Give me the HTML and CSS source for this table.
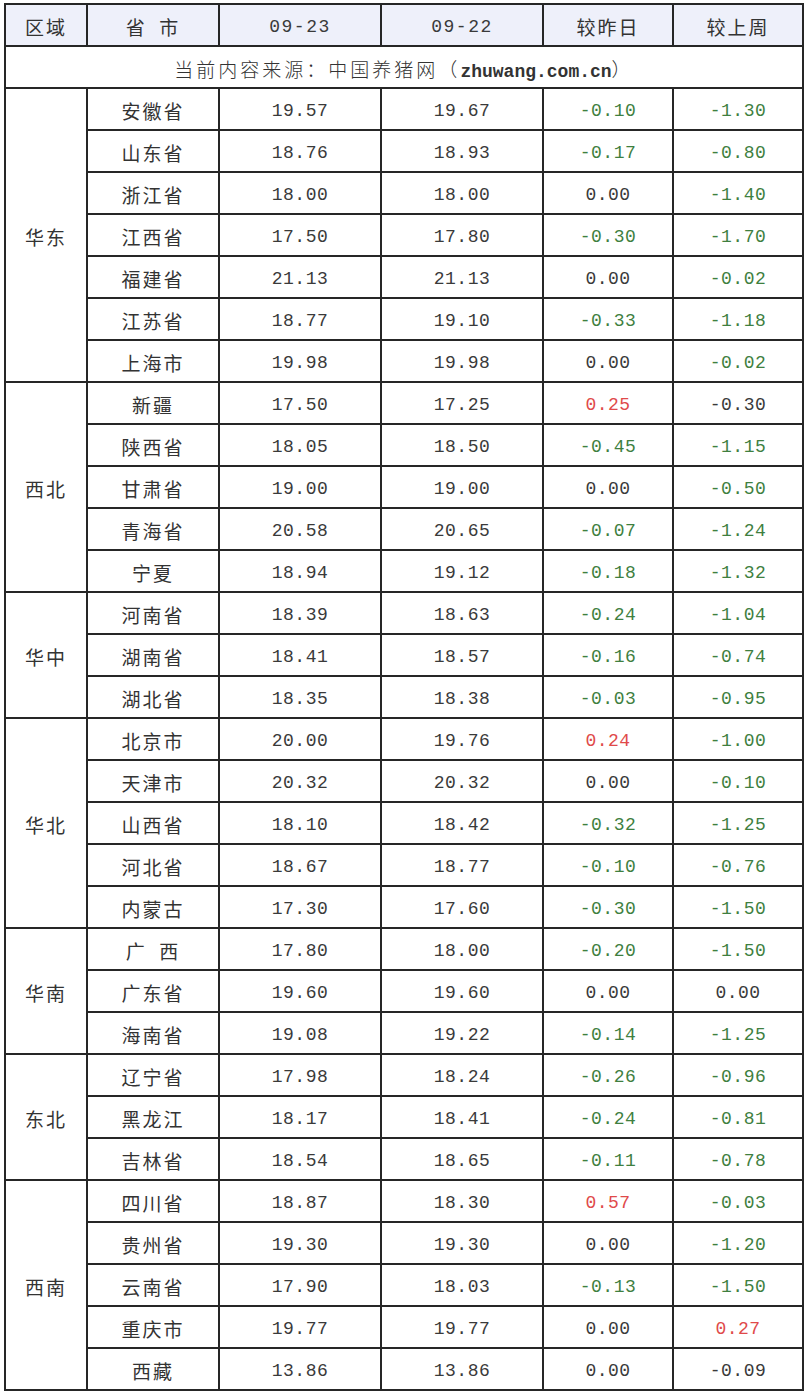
FILE: index.html
```html
<!DOCTYPE html>
<html lang="zh">
<head>
<meta charset="utf-8">
<link rel="stylesheet" href="styles.css">
</head>
<body>
<table class="price">
<colgroup>
<col class="c-region"><col class="c-prov"><col class="c-num"><col class="c-num"><col class="c-diff"><col class="c-diff">
</colgroup>
<thead>
<tr class="head"><th class="cn">区域</th><th class="cn">省&nbsp;&nbsp;市</th><th class="num">09-23</th><th class="num">09-22</th><th class="cn">较昨日</th><th class="cn">较上周</th></tr>
</thead>
<tbody>
<tr class="source"><td colspan="6"><span class="cn src">当前内容来源：中国养猪网（</span><span class="domain">zhuwang.com.cn</span><span class="cn src">）</span></td></tr>

<tr><td class="cn region" rowspan="7">华东</td><td class="cn">安徽省</td><td class="num">19.57</td><td class="num">19.67</td><td class="num dn">-0.10</td><td class="num dn">-1.30</td></tr>
<tr><td class="cn">山东省</td><td class="num">18.76</td><td class="num">18.93</td><td class="num dn">-0.17</td><td class="num dn">-0.80</td></tr>
<tr><td class="cn">浙江省</td><td class="num">18.00</td><td class="num">18.00</td><td class="num">0.00</td><td class="num dn">-1.40</td></tr>
<tr><td class="cn">江西省</td><td class="num">17.50</td><td class="num">17.80</td><td class="num dn">-0.30</td><td class="num dn">-1.70</td></tr>
<tr><td class="cn">福建省</td><td class="num">21.13</td><td class="num">21.13</td><td class="num">0.00</td><td class="num dn">-0.02</td></tr>
<tr><td class="cn">江苏省</td><td class="num">18.77</td><td class="num">19.10</td><td class="num dn">-0.33</td><td class="num dn">-1.18</td></tr>
<tr><td class="cn">上海市</td><td class="num">19.98</td><td class="num">19.98</td><td class="num">0.00</td><td class="num dn">-0.02</td></tr>

<tr><td class="cn region" rowspan="5">西北</td><td class="cn">新疆</td><td class="num">17.50</td><td class="num">17.25</td><td class="num up">0.25</td><td class="num">-0.30</td></tr>
<tr><td class="cn">陕西省</td><td class="num">18.05</td><td class="num">18.50</td><td class="num dn">-0.45</td><td class="num dn">-1.15</td></tr>
<tr><td class="cn">甘肃省</td><td class="num">19.00</td><td class="num">19.00</td><td class="num">0.00</td><td class="num dn">-0.50</td></tr>
<tr><td class="cn">青海省</td><td class="num">20.58</td><td class="num">20.65</td><td class="num dn">-0.07</td><td class="num dn">-1.24</td></tr>
<tr><td class="cn">宁夏</td><td class="num">18.94</td><td class="num">19.12</td><td class="num dn">-0.18</td><td class="num dn">-1.32</td></tr>

<tr><td class="cn region" rowspan="3">华中</td><td class="cn">河南省</td><td class="num">18.39</td><td class="num">18.63</td><td class="num dn">-0.24</td><td class="num dn">-1.04</td></tr>
<tr><td class="cn">湖南省</td><td class="num">18.41</td><td class="num">18.57</td><td class="num dn">-0.16</td><td class="num dn">-0.74</td></tr>
<tr><td class="cn">湖北省</td><td class="num">18.35</td><td class="num">18.38</td><td class="num dn">-0.03</td><td class="num dn">-0.95</td></tr>

<tr><td class="cn region" rowspan="5">华北</td><td class="cn">北京市</td><td class="num">20.00</td><td class="num">19.76</td><td class="num up">0.24</td><td class="num dn">-1.00</td></tr>
<tr><td class="cn">天津市</td><td class="num">20.32</td><td class="num">20.32</td><td class="num">0.00</td><td class="num dn">-0.10</td></tr>
<tr><td class="cn">山西省</td><td class="num">18.10</td><td class="num">18.42</td><td class="num dn">-0.32</td><td class="num dn">-1.25</td></tr>
<tr><td class="cn">河北省</td><td class="num">18.67</td><td class="num">18.77</td><td class="num dn">-0.10</td><td class="num dn">-0.76</td></tr>
<tr><td class="cn">内蒙古</td><td class="num">17.30</td><td class="num">17.60</td><td class="num dn">-0.30</td><td class="num dn">-1.50</td></tr>

<tr><td class="cn region" rowspan="3">华南</td><td class="cn">广&nbsp;&nbsp;西</td><td class="num">17.80</td><td class="num">18.00</td><td class="num dn">-0.20</td><td class="num dn">-1.50</td></tr>
<tr><td class="cn">广东省</td><td class="num">19.60</td><td class="num">19.60</td><td class="num">0.00</td><td class="num">0.00</td></tr>
<tr><td class="cn">海南省</td><td class="num">19.08</td><td class="num">19.22</td><td class="num dn">-0.14</td><td class="num dn">-1.25</td></tr>

<tr><td class="cn region" rowspan="3">东北</td><td class="cn">辽宁省</td><td class="num">17.98</td><td class="num">18.24</td><td class="num dn">-0.26</td><td class="num dn">-0.96</td></tr>
<tr><td class="cn">黑龙江</td><td class="num">18.17</td><td class="num">18.41</td><td class="num dn">-0.24</td><td class="num dn">-0.81</td></tr>
<tr><td class="cn">吉林省</td><td class="num">18.54</td><td class="num">18.65</td><td class="num dn">-0.11</td><td class="num dn">-0.78</td></tr>

<tr><td class="cn region" rowspan="5">西南</td><td class="cn">四川省</td><td class="num">18.87</td><td class="num">18.30</td><td class="num up">0.57</td><td class="num dn">-0.03</td></tr>
<tr><td class="cn">贵州省</td><td class="num">19.30</td><td class="num">19.30</td><td class="num">0.00</td><td class="num dn">-1.20</td></tr>
<tr><td class="cn">云南省</td><td class="num">17.90</td><td class="num">18.03</td><td class="num dn">-0.13</td><td class="num dn">-1.50</td></tr>
<tr><td class="cn">重庆市</td><td class="num">19.77</td><td class="num">19.77</td><td class="num">0.00</td><td class="num up">0.27</td></tr>
<tr><td class="cn">西藏</td><td class="num">13.86</td><td class="num">13.86</td><td class="num">0.00</td><td class="num">-0.09</td></tr>
</tbody>
</table>
</body>
</html>
```

FILE: styles.css
```css
html, body {
  margin: 0;
  padding: 0;
  background: #ffffff;
}

body {
  padding: 3px 0 0 4px;
}

.price {
  border-collapse: collapse;
  table-layout: fixed;
  width: 800px;
  color: #333333;
}

.c-region { width: 82px; }
.c-prov { width: 132px; }
.c-num { width: 162px; }
.c-diff { width: 130px; }

.price th,
.price td {
  border: 2px solid #262626;
  height: 37px;
  padding: 3px 0 0 0;
  text-align: center;
  vertical-align: middle;
  font-weight: normal;
  white-space: nowrap;
  overflow: hidden;
}

.head th {
  background: #eef0fa;
}

.cn {
  font-family: "Noto Sans CJK SC", "Noto Sans", sans-serif;
  font-size: 19px;
  font-weight: 300;
  letter-spacing: 2px;
  color: #333333;
}

.num {
  font-family: "Liberation Mono", "DejaVu Sans Mono", monospace;
  font-size: 18px;
  letter-spacing: 0.5px;
  color: #3a3a3a;
}

.head .num {
  letter-spacing: 1.5px;
}

.region {
  font-size: 19px;
}

.src {
  letter-spacing: 3px;
}

.domain {
  font-family: "Liberation Mono", "DejaVu Sans Mono", monospace;
  font-weight: bold;
  font-size: 18px;
  color: #333333;
}

.dn {
  color: #3f7f3f;
}

.up {
  color: #e04a4a;
}
```
